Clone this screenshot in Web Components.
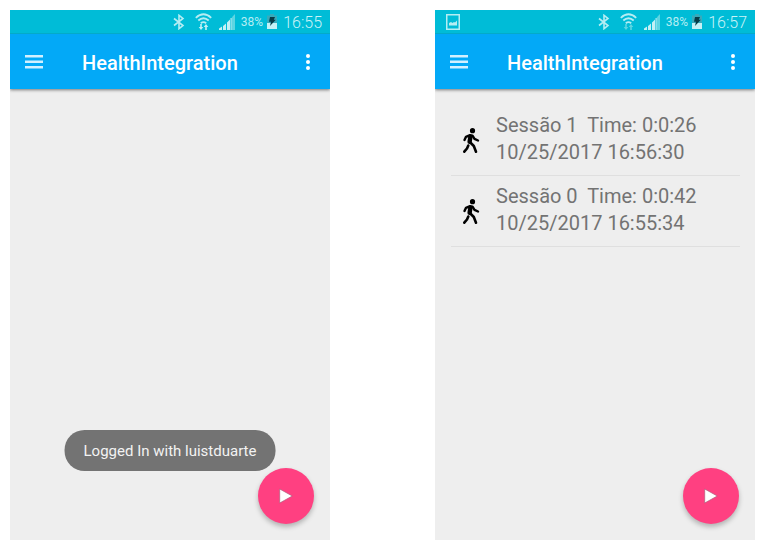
<!DOCTYPE html>
<html lang="pt">
<head>
<meta charset="utf-8">
<title>HealthIntegration</title>
<style>
body { margin: 0; font-family: Roboto, "Noto Sans", sans-serif; background: #fff; }
</style>
</head>
<body>
<screen-pair>
  <phone-screen>
    <status-bar slot="status" time="16:55" active></status-bar>
    <app-bar slot="bar">HealthIntegration</app-bar>
    <toast-message slot="overlay">Logged In with luistduarte</toast-message>
  </phone-screen>
  <phone-screen>
    <status-bar slot="status" time="16:57" picture></status-bar>
    <app-bar slot="bar">HealthIntegration</app-bar>
    <session-list>
      <session-item name="Sessão 1" time="0:0:26">10/25/2017 16:56:30</session-item>
      <session-item name="Sessão 0" time="0:0:42">10/25/2017 16:55:34</session-item>
    </session-list>
  </phone-screen>
</screen-pair>
<script>
class BaseElement extends HTMLElement {
  connectedCallback() {
    if (this.shadowRoot) return;
    this.attachShadow({ mode: 'open' }).innerHTML = this.render();
  }
}

customElements.define('screen-pair', class extends BaseElement {
  render() {
    return `<style>
      :host { display: grid; grid-template-columns: 1fr 1fr; column-gap: 105px; min-height: 100vh; box-sizing: border-box; padding: 10px 9px 9px 10px; }
    </style><slot></slot>`;
  }
});

customElements.define('phone-screen', class extends BaseElement {
  render() {
    return `<style>
      :host { display: flex; flex-direction: column; position: relative; background: #eee; min-width: 0; }
      main { flex: 1; }
    </style>
    <slot name="status"></slot><slot name="bar"></slot>
    <main><slot></slot></main>
    <slot name="overlay"></slot><play-button></play-button>`;
  }
});

customElements.define('status-bar', class extends BaseElement {
  render() {
    const picture = this.hasAttribute('picture') ? `<svg class="picture" width="14" height="16" viewBox="0 0 14 16" aria-label="Screenshot saved">
        <path d="M.75.75h12.5v14.5H.75z" fill="none" stroke="#b5edf3" stroke-width="1.5"/>
        <path d="M3 11.500V9l2-1 1.500 1L8 8l1 .5L11 6.500v5z" fill="#b5edf3"/></svg>` : '';
    const arrows = this.hasAttribute('active') ? '#c4f0f5' : '#5dd5e2';
    return `<style>
      :host { display: flex; align-items: center; height: 24px; box-sizing: border-box; padding: 0 8px 0 11px; background: #00bcd7; color: #b5edf3; border-bottom: 1px solid #03aac9; }
      .icons { display: flex; align-items: center; margin-left: auto; }
      svg { display: block; }
      .wifi { margin-left: 10px; }
      .signal { margin-left: 7px; }
      .percent { font-size: 12px; margin-left: 6px; padding-top: 1px; }
      .battery { margin-left: 4px; }
      time { font-size: 16px; font-weight: 300; color: #c9f3f7; margin-left: 6px; padding-top: 1px; }
    </style>${picture}
    <div class="icons">
      <svg width="12" height="16" viewBox="0 0 12 16" aria-label="Bluetooth"><path d="M1 4.500l9 7-4 3.200V1.300l4 3.200-9 7" fill="none" stroke="#b5edf3" stroke-width="1.600"/></svg>
      <svg class="wifi" width="17" height="18" viewBox="0 0 17 18" aria-label="Wi-Fi">
        <g fill="none" stroke="#b5edf3" stroke-width="1.800"><path d="M.8 4.800Q8.500-2.200 16.200 4.800M3.300 7.500q5.200-4.600 10.400 0M5.800 10.200q2.700-2.200 5.400 0"/></g>
        <path d="M5.200 11h1.600v3h1.500L6 17l-2.300-3h1.500zM10.200 17h1.600v-3h1.500L11 11l-2.300 3h1.500z" fill="${arrows}"/></svg>
      <svg class="signal" width="16" height="16" viewBox="0 0 16 16" aria-label="Signal"><path d="M0 16v-1.500l3-2V16zM4 16v-4l3-2.500V16zM8 16V8.500l3-3V16z" fill="#c4f0f5"/><path d="M12 16V4.500l1.500-1.500V16zM13.500 16V2.500L16 0v16z" fill="#5dd5e2"/><path d="M12 4v12" stroke="#a6e8f0"/></svg>
      <span class="percent">38%</span>
      <svg class="battery" width="10" height="15" viewBox="0 0 10 15" aria-label="Charging"><path d="M3 0h4v1.500h3V10H0V1.500h3z" fill="#38aabb"/><path d="M0 9h10v6H0z" fill="#c4f0f5"/><path d="M3 3h5L6.800 5.700h2L3 12l1-4.200H2z" fill="#063c48"/></svg>
      <time>${this.getAttribute('time')}</time>
    </div>`;
  }
});

customElements.define('app-bar', class extends BaseElement {
  render() {
    return `<style>
      :host { display: flex; align-items: center; height: 55px; background: #03a9f7; color: #fff; box-shadow: 0 1px 3px rgba(0,0,0,.5); clip-path: inset(0 0 -5px 0); }
      button { display: grid; place-items: center; width: 48px; height: 48px; padding: 0; border: 0; background: none; color: inherit; }
      .more { width: 44px; }
      h1 { flex: 1; margin: 0; padding: 2px 0 0 24px; font-size: 20px; line-height: 24px; font-weight: 500; }
    </style>
    <button aria-label="Menu"><svg width="18" height="14" viewBox="0 0 18 14"><path d="M0 0h18v2.500H0zM0 5.500h18v2.500H0zM0 11h18v2.500H0z" fill="#d3f0ff"/></svg></button>
    <h1><slot></slot></h1>
    <button class="more" aria-label="More options"><svg width="4" height="16" viewBox="0 0 4 16" fill="#fff"><circle cx="2" cy="2" r="2"/><circle cx="2" cy="8" r="2"/><circle cx="2" cy="14" r="2"/></svg></button>`;
  }
});

customElements.define('session-list', class extends BaseElement {
  render() {
    return `<style>:host { display: block; padding: 16px 15px 16px 16px; }</style><slot></slot>`;
  }
});

customElements.define('session-item', class extends BaseElement {
  render() {
    return `<style>
      :host { display: flex; align-items: center; border-bottom: 1px solid #dfdfdf; color: #737373; font-size: 20px; line-height: 27px; }
      svg { flex: none; margin-left: 8px; }
      div { padding: 7px 0 9px 13px; min-width: 0; }
      p { margin: 0; white-space: pre; }
    </style>
    <svg width="24" height="28" viewBox="0 -1 24 28" aria-label="Walking"><circle cx="13.500" cy="3.700" r="2.600"/><g fill="none" stroke="#000" stroke-linecap="round" stroke-linejoin="round"><path d="M5.500 13l1.500-3.200 4-1.700 2.500.6 2 3.200 3.500 1.600" stroke-width="2.400"/><path d="M11.400 9.800l-.8 5" stroke-width="4.400"/><path d="M10.800 15l4 4 2.200 5.700M9.300 18.500l-1.300 3-2.700 3.200" stroke-width="2.600"/></g></svg>
    <div><p>${this.getAttribute('name')}  Time: ${this.getAttribute('time')}</p><p><slot></slot></p></div>`;
  }
});

customElements.define('toast-message', class extends BaseElement {
  connectedCallback() { super.connectedCallback(); this.setAttribute('role', 'status'); }
  render() {
    return `<style>
      :host { position: absolute; left: 50%; bottom: 69px; transform: translateX(-50%); padding: 11px 19px 10px; border-radius: 20px; background: #737373; color: #f2f2f2; font-size: 15px; line-height: 20px; white-space: nowrap; }
    </style><slot></slot>`;
  }
});

customElements.define('play-button', class extends BaseElement {
  render() {
    return `<style>
      :host { position: absolute; right: 16px; bottom: 16px; }
      button { display: grid; place-items: center; width: 56px; height: 56px; padding: 0; border: 0; border-radius: 50%; background: #ff4081; box-shadow: 0 3px 5px rgba(0,0,0,.25); }
    </style>
    <button aria-label="Start session"><svg width="14" height="16" viewBox="0 0 14 16"><path d="M.7 1l12.600 7L.7 15z" fill="#fff" stroke="#b05c7c" stroke-width=".7"/></svg></button>`;
  }
});
</script>
</body>
</html>
